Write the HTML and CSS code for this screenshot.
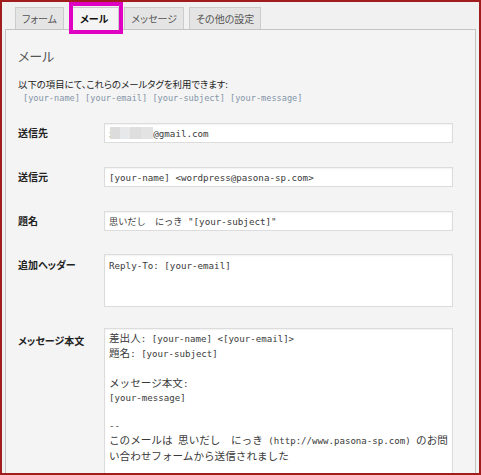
FILE: index.html
```html
<!DOCTYPE html>
<html lang="ja">
<head>
<meta charset="utf-8">
<title>メール設定</title>
<link rel="stylesheet" href="styles.css">
</head>
<body>
<div class="frame">
  <nav class="tabs">
    <span class="tab">フォーム</span>
    <span class="tab active">メール</span>
    <span class="tab">メッセージ</span>
    <span class="tab">その他の設定</span>
  </nav>
  <section class="panel">
    <h2 class="title">メール</h2>
    <p class="desc">以下の項目にて、これらのメールタグを利用できます:</p>
    <p class="tags"><span class="mailtag">[your-name]</span> <span class="mailtag">[your-email]</span> <span class="mailtag">[your-subject]</span> <span class="mailtag">[your-message]</span></p>
    <div class="form">
      <label class="label">送信先</label>
      <div class="field">
        <input class="input" type="text" value="xxxxxxxx@gmail.com">
        <span class="mosaic"></span>
      </div>

      <label class="label">送信元</label>
      <div class="field">
        <input class="input" type="text" value="[your-name] &lt;wordpress@pasona-sp.com&gt;">
      </div>

      <label class="label">題名</label>
      <div class="field">
        <input class="input" type="text" value="思いだし　にっき &quot;[your-subject]&quot;">
      </div>

      <label class="label">追加ヘッダー</label>
      <div class="field">
        <textarea class="area area-short">Reply-To: [your-email]</textarea>
      </div>

      <label class="label">メッセージ本文</label>
      <div class="field">
        <div class="area area-body"><span class="ja">差出人</span>: [your-name] &lt;[your-email]&gt;
<span class="ja">題名</span>: [your-subject]

<span class="ja">メッセージ本文</span>:
[your-message]

--
<span class="ja">このメールは</span> <span class="ja">思いだし　にっき</span> (http://www.pasona-sp.com) <span class="ja">のお問</span>
<span class="ja">い合わせフォームから送信されました</span></div>
      </div>
    </div>
  </section>
</div>
</body>
</html>
```
FILE: styles.css
```css
html, body {
  margin: 0;
  padding: 0;
}

body {
  font-family: "Noto Sans CJK JP", "Noto Sans", sans-serif;
  font-feature-settings: "palt";
  color: #222;
}

.frame {
  box-sizing: border-box;
  width: 481px;
  height: 475px;
  border: 2px solid #a11d1d;
  background: #f1f1f1;
  padding: 5px 3px 0 3px;
  overflow: hidden;
}

.tabs {
  display: flex;
  align-items: flex-start;
  gap: 5px;
  padding-left: 10px;
  height: 23px;
}

.tab {
  box-sizing: border-box;
  height: 22px;
  padding: 0 6px;
  border: 1px solid #cbcbcb;
  border-bottom: none;
  background: #e4e4e4;
  color: #555;
  font-size: 10px;
  line-height: 21px;
  white-space: nowrap;
}

.tab.active {
  position: relative;
  z-index: 2;
  height: 23px;
  padding: 0 10px;
  background: #f4f4f4;
  color: #111;
  font-weight: 700;
}

.tab.active::after {
  content: "";
  position: absolute;
  top: -6px;
  left: -1px;
  right: -5px;
  bottom: -4px;
  border: 4px solid #e000c2;
}

.panel {
  margin-top: -1px;
  border: 1px solid #c3c3c3;
  background: #f4f4f4;
  padding: 16px 0 40px 12px;
}

.title {
  margin: 0 0 11px;
  font-size: 13px;
  line-height: 20px;
  font-weight: 400;
  color: #555;
}

.desc {
  margin: 0;
  font-size: 9.4px;
  line-height: 14px;
  color: #222;
}

.tags {
  margin: 0;
  padding-left: 5px;
  font-family: "DejaVu Sans Mono", monospace;
  font-feature-settings: normal;
  font-size: 8.6px;
  line-height: 14px;
  white-space: pre;
}

.mailtag {
  color: #8494a8;
}

.form {
  display: grid;
  grid-template-columns: 86px 349px;
  row-gap: 24px;
  margin-top: 18px;
}

.label {
  font-size: 10px;
  line-height: 20px;
  font-weight: 700;
  color: #222;
}

.field {
  position: relative;
}

.input,
.area {
  box-sizing: border-box;
  display: block;
  width: 349px;
  margin: 0;
  border: 1px solid #dcdcdc;
  background: #fff;
  box-shadow: inset 0 1px 2px rgba(0, 0, 0, 0.06);
  font-family: "DejaVu Sans Mono", "Noto Sans CJK JP", monospace;
  font-feature-settings: normal;
  font-size: 9.2px;
  color: #3a3a3a;
  outline: none;
}

.input {
  height: 20px;
  padding: 0 4px;
  line-height: 18px;
}

.area {
  padding: 3px 4px;
  line-height: 14.2px;
  resize: none;
  overflow: hidden;
}

.area-short {
  height: 53px;
  margin-top: -1px;
  padding-top: 4px;
}

.area-body {
  height: 170px;
  margin-top: -3px;
  padding-top: 2px;
  white-space: pre;
  font-size: 9.1px;
}

.ja {
  font-family: "Noto Sans CJK JP", sans-serif;
  font-size: 10.6px;
  line-height: 14px;
}

.mosaic {
  position: absolute;
  left: 6px;
  top: 4px;
  width: 43px;
  height: 12px;
  background:
    linear-gradient(to right,
      #dcdcdc 0 10px, #e6e8ea 10px 20px, #dedede 20px 31px, #e3e3e3 31px 43px);
}
```
